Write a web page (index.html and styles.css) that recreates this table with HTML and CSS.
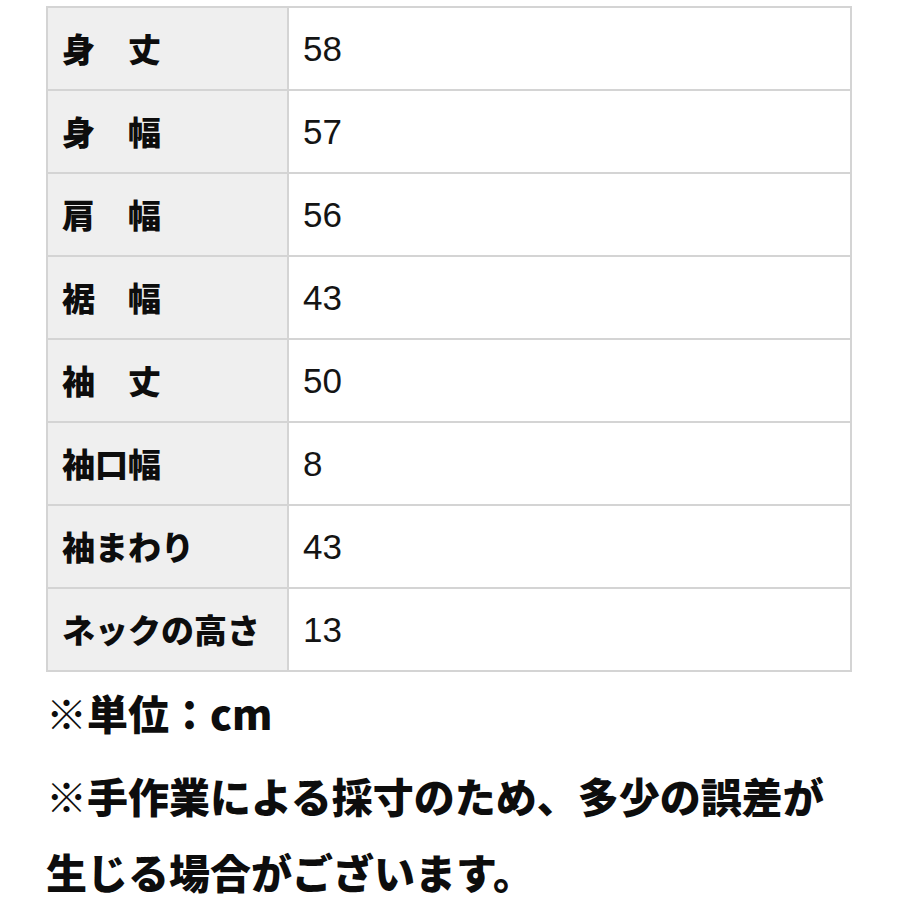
FILE: index.html
```html
<!DOCTYPE html>
<html lang="ja">
<head>
<meta charset="utf-8">
<link rel="stylesheet" href="styles.css">
</head>
<body>
<table class="size-table">
  <tbody>
    <tr><th class="label">身　丈</th><td class="value">58</td></tr>
    <tr><th class="label">身　幅</th><td class="value">57</td></tr>
    <tr><th class="label">肩　幅</th><td class="value">56</td></tr>
    <tr><th class="label">裾　幅</th><td class="value">43</td></tr>
    <tr><th class="label">袖　丈</th><td class="value">50</td></tr>
    <tr><th class="label">袖口幅</th><td class="value">8</td></tr>
    <tr><th class="label">袖まわり</th><td class="value">43</td></tr>
    <tr><th class="label">ネックの高さ</th><td class="value">13</td></tr>
  </tbody>
</table>
<p class="note unit">※単位：cm</p>
<p class="note">※手作業による採寸のため、多少の誤差が<br>生じる場合がございます。</p>
</body>
</html>
```
FILE: styles.css
```css
html, body {
  background: #ffffff;
}
body {
  margin: 0;
  padding: 6px 0 0 46px;
  font-family: "Noto Sans CJK JP", "Noto Sans", sans-serif;
  color: #111111;
}
.size-table {
  border-collapse: collapse;
  width: 806px;
  table-layout: fixed;
}
.size-table tr {
  height: 83px;
}
.size-table th,
.size-table td {
  border: 2px solid #d4d4d4;
  padding: 0;
  vertical-align: middle;
  text-align: left;
}
.label {
  width: 241px;
  background: #efefef;
  font-weight: 900;
  font-size: 33px;
  line-height: 1;
  padding-left: 14px !important;
  white-space: nowrap;
  box-sizing: border-box;
  color: #0d0d0d;
}
.value {
  background: #ffffff;
  font-family: "Liberation Sans", Arial, sans-serif;
  font-size: 35px;
  line-height: 1;
  padding-left: 14px !important;
  color: #141414;
}
.note {
  margin: 0;
  font-weight: 900;
  font-size: 41px;
  line-height: 76px;
  letter-spacing: 0;
  color: #0d0d0d;
}
.unit {
  margin-top: 2px;
  margin-bottom: 7px;
}
```
